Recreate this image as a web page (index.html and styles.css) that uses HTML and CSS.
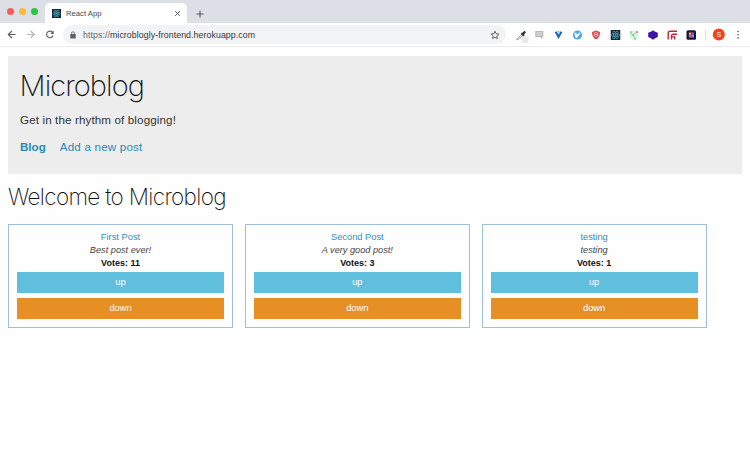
FILE: index.html
```html
<!DOCTYPE html>
<html lang="en">
<head>
<meta charset="utf-8">
<title>React App</title>
<link rel="stylesheet" href="styles.css">
</head>
<body>
<svg class="defs" width="0" height="0">
  <symbol id="react" viewBox="0 0 10 10">
    <rect width="10" height="10" fill="#15262f"/>
    <g fill="none" stroke="#4fa9c6" stroke-width=".65">
      <ellipse cx="5" cy="5" rx="4.3" ry="1.7"/>
      <ellipse cx="5" cy="5" rx="4.3" ry="1.7" transform="rotate(60 5 5)"/>
      <ellipse cx="5" cy="5" rx="4.3" ry="1.7" transform="rotate(120 5 5)"/>
    </g>
    <circle cx="5" cy="5" r=".8" fill="#61c5e5"/>
  </symbol>
</svg>
<header class="browser">
  <div class="tabs">
    <div class="lights"><i class="red"></i><i class="yellow"></i><i class="green"></i></div>
    <div class="tab">
      <svg class="favicon"><use href="#react"/></svg>
      <span class="tab-title">React App</span>
      <svg class="close" viewBox="0 0 6 6"><path d="M1 1l4 4M5 1L1 5" stroke="#444" stroke-width=".8"/></svg>
    </div>
    <svg class="plus" viewBox="0 0 8 8"><path d="M4 .5v7M.5 4h7" stroke="#555" stroke-width="1"/></svg>
  </div>
  <div class="toolbar">
    <svg class="nav" viewBox="0 0 63 24" fill="none" stroke="#5c5e61" stroke-width="1.1">
      <path d="M15.500 11.500H8.500M11.800 8L8.300 11.500L11.800 15"/>
      <path stroke="#b5b6b8" d="M27 11.500H34M30.700 8L34.200 11.500L30.700 15"/>
      <path d="M52.300 9.200A3.300 3.300 0 1 0 53 12.500"/>
      <path d="M53.700 7.600V11H50.300Z" fill="#5c5e61" stroke="none"/>
    </svg>
    <div class="address">
      <svg class="lock" viewBox="0 0 6 8"><rect x=".3" y="3" width="5.400" height="4.500" rx=".6" fill="#5b5d60"/><path d="M1.500 3.200V2.300a1.500 1.500 0 0 1 3 0v.9" fill="none" stroke="#5b5d60" stroke-width=".8"/></svg>
      <span class="url"><span class="scheme">https://</span>microblogly-frontend.herokuapp.com</span>
      <svg class="star" viewBox="0 0 10 10"><path d="M5 1.200L6.100 3.700L8.900 4L6.800 5.900L7.400 8.600L5 7.200L2.600 8.600L3.200 5.900L1.100 4L3.900 3.700Z" fill="none" stroke="#555" stroke-width=".9"/></svg>
    </div>
    <svg class="extensions" viewBox="510 0 240 24">
      <rect x="522" y="13" width="6.500" height="7" rx="1" fill="#e9e9e9"/>
      <path d="M517 16.200L521.500 11.200L522.800 12.500L518 16.500L516.400 16.900Z" fill="#eee" stroke="#777" stroke-width=".6"/>
      <path d="M521.500 10l2.700 2.700" stroke="#2e2e2e" stroke-width="1.300"/><path d="M522.600 11.400L524.500 9.300" stroke="#2e2e2e" stroke-width="2.400" stroke-linecap="round"/>
      <path d="M535.300 8h8v6h-1v2.300L540 14h-4.700Z" fill="#b8b8b8"/><path d="M536.500 10h5.500M536.500 12h5.500" stroke="#efefef" stroke-width=".8"/>
      <path d="M555.600 8.800L558.500 13.800L561.400 8.800" fill="none" stroke="#1465c0" stroke-width="2.100"/><circle cx="558.500" cy="8.800" r="1" fill="#69b5e9"/>
      <circle cx="577.500" cy="12" r="4.600" fill="#51a7dc"/><path d="M574.300 9.800h2l.5 2.300 2.700-2.700 1.200.5-3.800 5.200-1.600-.9Z" fill="#fff"/>
      <path d="M596 7.500l4.100 1.500c0 4-1.500 6.200-4.100 7.600c-2.600-1.400-4.100-3.600-4.100-7.600Z" fill="#df4b50"/><circle cx="596" cy="11.500" r="2" fill="none" stroke="#fff" stroke-width=".5"/><path d="M595.200 11.500h1.600" stroke="#fff"/>
      <use href="#react" x="610.500" y="7" width="10" height="10"/>
      <circle cx="634" cy="12" r="4.600" fill="#d5f4e3"/><path d="M630 10l3 2 4-3M633 12l2 4" fill="none" stroke="#75d5a4" stroke-width=".8"/><circle cx="637" cy="9" r="1" fill="#ef7a5a"/><circle cx="631" cy="9" r=".8" fill="#39bd75"/><circle cx="635" cy="16" r=".8" fill="#39bd75"/><circle cx="633" cy="12" r=".8" fill="#ef7a5a"/>
      <path d="M653 7.200l1.700 1.200 3.100 1.400v4.300l-3.100 1.400-1.700 1.300-1.700-1.300-3.100-1.400V9.800l3.100-1.400Z" fill="#4015a5"/>
      <path d="M668.200 16.500V10.200a2 2 0 0 1 2-2h6.800M671.500 16.500V13a1.700 1.700 0 0 1 1.700-1.700h3.800M671.500 13.900h3.200v2.600" fill="none" stroke="#bd2637" stroke-width="1.400"/>
      <rect x="686.500" y="7.300" width="9.500" height="9.500" rx="1.500" fill="#15143e"/><rect x="688.800" y="9.500" width="2.300" height="2.300" fill="#f1aa58"/><rect x="691.400" y="9.500" width="2.500" height="2.300" fill="#cc55c3"/><rect x="688.800" y="12" width="2.300" height="2.500" fill="#e65782"/><rect x="691.400" y="12" width="2.500" height="2.500" fill="#6ca9eb"/>
      <path d="M705.500 7v9.500" stroke="#d5d6d8" stroke-width=".8"/>
      <circle cx="718.800" cy="11.500" r="6" fill="#f1441e"/><text x="718.800" y="13.800" class="avatar">S</text>
      <g fill="#555"><circle cx="738" cy="8.500" r=".8"/><circle cx="738" cy="11.700" r=".8"/><circle cx="738" cy="14.900" r=".8"/></g>
    </svg>
  </div>
</header>
<main>
  <section class="jumbotron">
    <h1>Microblog</h1>
    <p>Get in the rhythm of blogging!</p>
    <nav><a class="active">Blog</a><a class="add">Add a new post</a></nav>
  </section>
  <h2>Welcome to Microblog</h2>
  <section class="posts">
    <article class="card"><a>First Post</a><em>Best post ever!</em><b>Votes: 11</b><button class="up">up</button><button class="down">down</button></article>
    <article class="card"><a>Second Post</a><em>A very good post!</em><b>Votes: 3</b><button class="up">up</button><button class="down">down</button></article>
    <article class="card"><a>testing</a><em>testing</em><b>Votes: 1</b><button class="up">up</button><button class="down">down</button></article>
  </section>
</main>
</body>
</html>
```
FILE: styles.css
```css
* { box-sizing: border-box; }
body { margin: 0; background: #fefefe; font-family: "Liberation Sans", Arial, sans-serif; color: #111; height: 455px; overflow: hidden; }
.defs { position: absolute; }
.tabs { height: 23px; background: #dcdfe5; display: flex; align-items: flex-start; }
.lights { display: flex; gap: 5px; padding: 8px 0 0 7px; width: 45px; }
.lights i { width: 7px; height: 7px; border-radius: 50%; flex: none; }
.red { background: #fb5b57; }
.yellow { background: #fcb938; }
.green { background: #2bc640; }
.tab { width: 142px; height: 20px; margin-top: 3px; padding: 1px 6px 0 7px; background: #fff; border-radius: 5px 5px 0 0; display: flex; align-items: center; }
.favicon { width: 9px; height: 9px; margin-right: 5px; }
.tab-title { font-size: 7.7px; color: #46494d; flex: 1; }
.close { width: 7px; height: 7px; }
.plus { width: 8px; height: 8px; margin: 10px 0 0 9px; }
.toolbar { height: 24px; background: #fff; border-bottom: 1px solid #e9eaeb; display: flex; align-items: flex-start; }
.nav { width: 63px; height: 24px; flex: none; }
.address { width: 443px; height: 19px; margin-top: 2px; background: #f1f3f4; border-radius: 10px; display: flex; align-items: center; padding: 0 6px 0 7px; flex: none; }
.lock { width: 6px; height: 8px; margin-right: 7px; }
.url { font-size: 8.8px; letter-spacing: .07px; color: #35373a; flex: 1; white-space: nowrap; }
.scheme { color: #65686c; }
.star { width: 10px; height: 10px; }
.extensions { width: 240px; height: 24px; margin-left: 4px; flex: none; }
.avatar { font-size: 6.5px; fill: #fff; text-anchor: middle; }
main { padding: 9px 8px 0; }
.jumbotron { width: 734px; height: 118px; padding: 12px; background: #ededed; }
h1, h2 { margin: 0; font-family: Inter, "Liberation Sans", sans-serif; font-weight: 200; white-space: nowrap; }
h1 { font-size: 29px; line-height: 35px; height: 36px; letter-spacing: -.9px; text-indent: -.5px; }
.jumbotron p { margin: 8px 0 0; font-size: 11.6px; line-height: 16px; letter-spacing: .13px; color: #333; }
nav { display: flex; gap: 14px; margin-top: 10px; font-size: 11.6px; line-height: 17px; color: #268bb5; }
.active { font-weight: 700; }
.add { letter-spacing: .2px; }
h2 { margin-top: 8px; font-size: 22.5px; line-height: 30px; letter-spacing: -.65px; }
.posts { display: grid; grid-template-columns: repeat(3, 225px); gap: 11.8px; margin-top: 12px; }
.card { height: 104px; padding: 6px 8px 0; border: 1px solid #9dc0d8; text-align: center; font-size: 9.3px; line-height: 13px; }
.card a, .card em, .card b { display: block; }
.card a { color: #348eb9; }
.card em { color: #444; font-size: 9.2px; }
.card b { color: #111; font-size: 9px; }
button { display: block; width: 207px; height: 21px; border: 0; padding: 0; color: #fff; font: 9.3px/21px "Liberation Sans", Arial, sans-serif; }
.up { background: #60bfdd; margin: 2px 0 5px; }
.down { background: #e68f25; }
```
